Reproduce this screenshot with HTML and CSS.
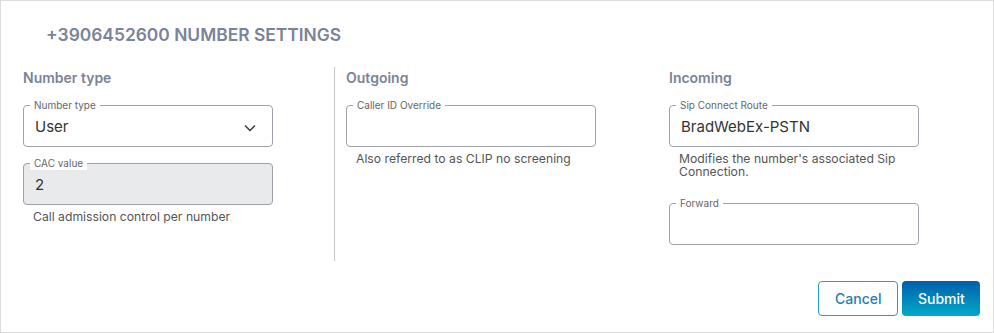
FILE: index.html
```html
<!DOCTYPE html>
<html lang="en">
<head>
    <meta charset="UTF-8">
    <meta name="viewport" content="width=device-width, initial-scale=1.0">
    <title>Number Settings</title>
    <link rel="stylesheet" href="styles.css">
</head>
<body>
    <div class="panel">
        <h1 class="title">+3906452600 NUMBER SETTINGS</h1>

        <div class="columns">
            <div class="col col-first">
                <h2 class="col-title">Number type</h2>
                <div class="field">
                    <label class="field-label">Number type</label>
                    <div class="field-box select-box">
                        <span class="field-value">User</span>
                        <svg class="chevron" width="12" height="8" viewBox="0 0 12 8">
                            <path d="M1 1.5 L6 6.5 L11 1.5" fill="none" stroke="#3a3a3a" stroke-width="1.5"/>
                        </svg>
                    </div>
                </div>
                <div class="field">
                    <label class="field-label">CAC value</label>
                    <div class="field-box disabled">
                        <span class="field-value">2</span>
                    </div>
                    <div class="helper">Call admission control per number</div>
                </div>
            </div>

            <div class="col col-mid">
                <h2 class="col-title">Outgoing</h2>
                <div class="field">
                    <label class="field-label">Caller ID Override</label>
                    <div class="field-box"></div>
                    <div class="helper">Also referred to as CLIP no screening</div>
                </div>
            </div>

            <div class="col">
                <h2 class="col-title">Incoming</h2>
                <div class="field">
                    <label class="field-label">Sip Connect Route</label>
                    <div class="field-box">
                        <span class="field-value">BradWebEx-PSTN</span>
                    </div>
                    <div class="helper">Modifies the number's associated Sip Connection.</div>
                </div>
                <div class="field">
                    <label class="field-label">Forward</label>
                    <div class="field-box"></div>
                </div>
            </div>
        </div>

        <div class="button-group">
            <button type="button" class="cancel-btn">Cancel</button>
            <button type="button" class="submit-btn">Submit</button>
        </div>
    </div>
</body>
</html>
```

FILE: styles.css
```css
body {
    margin: 0;
    font-family: Inter, "Noto Sans", sans-serif;
    color: #333;
}
.panel {
    width: 994px;
    height: 333px;
    box-sizing: border-box;
    border: 1px solid #dcdcdc;
    padding: 0 13px 0 22px;
}
.title {
    margin: 23px 0 0 23px;
    font-size: 17.4px;
    font-weight: 600;
    line-height: 22px;
    color: #7b8398;
}
.columns {
    display: grid;
    grid-template-columns: 311px 335px 1fr;
    margin-top: 21px;
}
.col-mid {
    border-left: 1px solid #c4c7cc;
    padding-left: 11px;
}
.col-title {
    margin: 2px 0 18px;
    font-size: 14px;
    font-weight: 600;
    line-height: 18px;
    color: #7b8398;
}
.field {
    position: relative;
    width: 250px;
    margin-bottom: 16px;
}
.field-label {
    position: absolute;
    top: -5px;
    left: 7px;
    padding: 0 4px;
    height: 12px;
    line-height: 11px;
    font-size: 10px;
    color: #666;
    background: #fff;
}
.field-box {
    height: 42px;
    box-sizing: border-box;
    border: 1px solid #9ea3ab;
    border-radius: 4px;
    padding: 12px 11px 0;
    display: flex;
    align-items: flex-start;
    justify-content: space-between;
}
.field-box.disabled {
    background: #e9eaec;
}
.field-value {
    font-size: 15px;
    line-height: 18px;
    color: #333;
}
.chevron {
    margin: 6px 5px 0 0;
}
.helper {
    margin: 5px 0 25px 10px;
    font-size: 12.2px;
    line-height: 13px;
    color: #555;
}
.button-group {
    display: flex;
    justify-content: flex-end;
    gap: 4px;
    margin-top: 20px;
}
button {
    height: 35px;
    padding: 0 16px;
    border-radius: 4px;
    font-family: Inter, "Noto Sans", sans-serif;
    font-size: 14px;
    font-weight: 500;
    cursor: pointer;
}
.cancel-btn {
    width: 80px;
    background: #fff;
    border: 1px solid #2a9fc4;
    color: #1f80b5;
}
.submit-btn {
    width: 78px;
    border: none;
    color: #fff;
    background: linear-gradient(#005fab, #00aaca);
}
```
